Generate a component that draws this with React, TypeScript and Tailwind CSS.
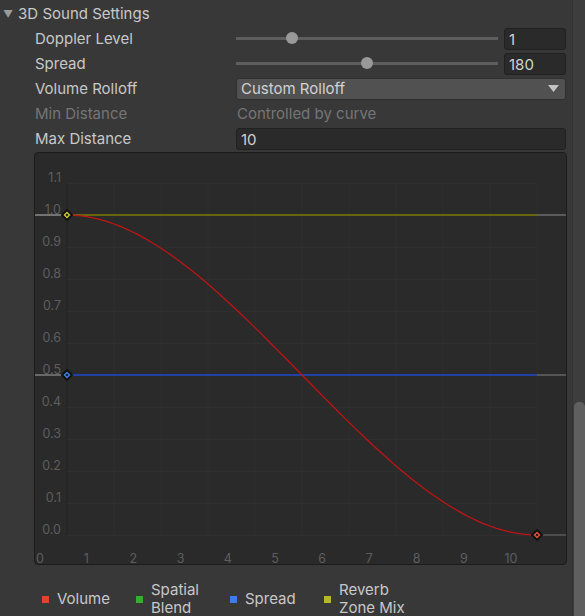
import React from "react";

const FONT = { fontFamily: "Inter, 'Noto Sans', sans-serif" };

function Slider({ pos }: { pos: number }) {
  return (
    <div className="relative h-[21px] w-[262px] flex items-center">
      <div className="h-[3px] w-full bg-[#5e5e5e]" />
      <div
        className="absolute top-[4px] h-[12px] w-[12px] rounded-full bg-[#999999]"
        style={{ left: pos - 6 }}
      />
    </div>
  );
}

function NumField({ value, wide }: { value: string; wide?: boolean }) {
  return (
    <div
      className={`h-[22px] ${wide ? "w-[330px]" : "w-[62px]"} rounded-[3px] border border-[#212121] bg-[#2a2a2a] px-[4px] text-[15px] leading-[21px] text-[#d2d2d2]`}
    >
      {value}
    </div>
  );
}

function Row({ label, disabled, children }: { label: string; disabled?: boolean; children: React.ReactNode }) {
  return (
    <div className="flex h-[25px] items-center">
      <div className={`w-[236px] pl-[35px] pt-[2px] text-[15px] ${disabled ? "text-[#757575]" : "text-[#c8c8c8]"}`}>{label}</div>
      {children}
    </div>
  );
}

// graph box is 533 x 413; plot spans local x 32..502, y 30..382
const X0 = 32;
const X1 = 502;
const yOf = (v: number) => 382 - 320 * v;

function Graph() {
  const yLabels = ["1.1", "1.0", "0.9", "0.8", "0.7", "0.6", "0.5", "0.4", "0.3", "0.2", "0.1", "0.0"];
  const pts: string[] = [];
  for (let i = 0; i <= 80; i++) {
    const t = i / 80;
    const s = 1 - (3 * t * t - 2 * t * t * t);
    pts.push(`${(X0 + (X1 - X0) * t).toFixed(1)},${yOf(s).toFixed(1)}`);
  }
  return (
    <div className="ml-[34px] h-[413px] w-[533px] rounded-[4px] border border-[#1c1c1c] bg-[#2a2a2a] overflow-hidden">
      <svg width="533" height="413" className="block" style={FONT}>
        {/* grid */}
        {Array.from({ length: 11 }).map((_, i) => (
          <line key={"gx" + i} x1={X0 + 47 * i} x2={X0 + 47 * i} y1={30} y2={382} stroke={i === 0 ? "#232323" : "#2f2f2f"} strokeWidth="1" />
        ))}
        {Array.from({ length: 12 }).map((_, i) => (
          <line key={"gy" + i} x1={X0} x2={X1} y1={yOf(i / 10) + 0.5} y2={yOf(i / 10) + 0.5} stroke="#2f2f2f" strokeWidth="1" />
        ))}
        {/* y labels */}
        {yLabels.map((l, i) => (
          <text key={l} x={26} y={yOf(1.1 - i / 10) - 1} textAnchor="end" fontSize="12.5" fill="#5e5e5e">
            {l}
          </text>
        ))}
        {/* x labels */}
        {Array.from({ length: 11 }).map((_, i) => (
          <text key={"xl" + i} x={i === 0 ? 1 : 4 + 47.2 * i} y={410} textAnchor={i === 0 ? "start" : "middle"} fontSize="12.5" fill="#5e5e5e">
            {i}
          </text>
        ))}
        {/* out-of-range extensions */}
        <line x1={0} x2={X0} y1={62} y2={62} stroke="#8c8c8c" strokeWidth="1.3" />
        <line x1={X1} x2={533} y1={62} y2={62} stroke="#6e6e6e" strokeWidth="1.3" />
        <line x1={0} x2={X0} y1={222} y2={222} stroke="#8c8c8c" strokeWidth="1.3" />
        <line x1={X1} x2={533} y1={222} y2={222} stroke="#6e6e6e" strokeWidth="1.3" />
        <line x1={X1} x2={533} y1={382} y2={382} stroke="#5a5a5a" strokeWidth="1.3" />
        {/* curves */}
        <line x1={X0} x2={X1} y1={62} y2={62} stroke="#7d7a06" strokeWidth="1.6" />
        <line x1={X0} x2={X1} y1={222} y2={222} stroke="#1f48cc" strokeWidth="1.6" />
        <polyline points={pts.join(" ")} fill="none" stroke="#c01414" strokeWidth="1.3" />
        {/* keys */}
        {[
          { x: X0, y: 62, c: "#c8c23a" },
          { x: X0, y: 222, c: "#3d7ee0" },
          { x: X1, y: 382, c: "#e0503a" },
        ].map((k, i) => (
          <g key={"k" + i}>
            <rect x={k.x - 4.5} y={k.y - 4.5} width="9" height="9" transform={`rotate(45 ${k.x} ${k.y})`} fill="#111111" />
            <rect x={k.x - 2.5} y={k.y - 2.5} width="5" height="5" transform={`rotate(45 ${k.x} ${k.y})`} fill={k.c} />
            <rect x={k.x - 1} y={k.y - 1} width="2" height="2" transform={`rotate(45 ${k.x} ${k.y})`} fill="#111111" />
          </g>
        ))}
      </svg>
    </div>
  );
}

function Legend({ color, lines }: { color: string; lines: string[] }) {
  return (
    <div className="flex items-center">
      <div className="mr-[8px] h-[7px] w-[7px]" style={{ backgroundColor: color }} />
      <div className="text-[15px] leading-[18px] text-[#c8c8c8]">
        {lines.map((l) => (
          <div key={l}>{l}</div>
        ))}
      </div>
    </div>
  );
}

export default function App() {
  return (
    <div className="relative h-[616px] w-[585px] overflow-hidden bg-[#383838]" style={FONT}>
      {/* scrollbar */}
      <div className="absolute right-0 top-0 h-full w-[13px] border-l border-[#323232] bg-[#3d3d3d]">
        <div className="absolute left-[1px] top-[402px] h-[230px] w-[11px] rounded-t-[5px] bg-[#5f5f5f]" />
      </div>

      <div className="flex h-[26px] items-center pl-[3px] pt-[2px] text-[15px] text-[#c8c8c8]">
        <span className="mr-[5px] text-[10px] text-[#9a9a9a]">▼</span>
        3D Sound Settings
      </div>
      <Row label="Doppler Level">
        <div className="flex items-center gap-[6px]">
          <Slider pos={56} />
          <NumField value="1" />
        </div>
      </Row>
      <Row label="Spread">
        <div className="flex items-center gap-[6px]">
          <Slider pos={131} />
          <NumField value="180" />
        </div>
      </Row>
      <Row label="Volume Rolloff">
        <div className="flex h-[22px] w-[330px] items-center justify-between rounded-[3px] border border-[#303030] bg-[#515151] pl-[4px] pr-[6px] text-[15px] text-[#d2d2d2]">
          <span className="pt-[1px]">Custom Rolloff</span>
          <svg width="11" height="7" viewBox="0 0 11 7">
            <path d="M0 0 H11 L5.5 7 Z" fill="#c4c4c4" />
          </svg>
        </div>
      </Row>
      <Row label="Min Distance" disabled>
        <div className="pl-[1px] pt-[2px] text-[15px] text-[#757575]">Controlled by curve</div>
      </Row>
      <Row label="Max Distance">
        <NumField value="10" wide />
      </Row>
      <div className="h-[1px]" />
      <Graph />
      <div className="ml-[42px] mt-[16px] flex items-center">
        <div className="w-[94px]"><Legend color="#e0452c" lines={["Volume"]} /></div>
        <div className="w-[94px]"><Legend color="#35b02e" lines={["Spatial", "Blend"]} /></div>
        <div className="w-[94px]"><Legend color="#3b7fe6" lines={["Spread"]} /></div>
        <div><Legend color="#b6b630" lines={["Reverb", "Zone Mix"]} /></div>
      </div>
    </div>
  );
}
